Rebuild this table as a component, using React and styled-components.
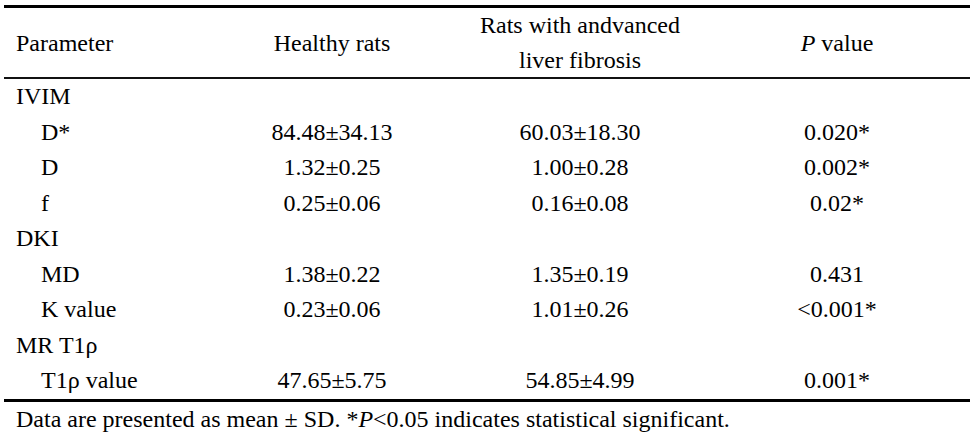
import React from "react";
import styled, { createGlobalStyle } from "styled-components";

const GlobalStyle = createGlobalStyle`
  html, body {
    margin: 0;
    padding: 0;
    background: #ffffff;
  }
`;

const Sheet = styled.div`
  width: 966px;
  margin: 5px 0 0 4px;
  font-family: "Liberation Serif", Tinos, "Times New Roman", monospace;
  font-size: 24px;
  color: #000000;
`;

const Grid = styled.div`
  display: grid;
  grid-template-columns: 204px 248px 248px 266px;
`;

const HeaderRow = styled(Grid)`
  height: 69px;
  border-top: 3px solid #000;
  border-bottom: 2px solid #111;
  align-items: center;
`;

const Body = styled.div`
  border-bottom: 3px solid #000;
`;

const Row = styled(Grid)`
  height: 35.5px;
`;

const Cell = styled.div`
  line-height: 35px;
  white-space: nowrap;
  text-align: ${(p) => (p.$left ? "left" : "center")};
  padding-left: ${(p) => (p.$left ? (p.$indent ? "37px" : "12px") : "0")};
`;

const Footnote = styled.p`
  margin: 0;
  padding-left: 12px;
  line-height: 35px;
  white-space: nowrap;
`;

const rows = [
  { label: "IVIM", group: true },
  { label: "D*", healthy: "84.48±34.13", fibrosis: "60.03±18.30", p: "0.020*" },
  { label: "D", healthy: "1.32±0.25", fibrosis: "1.00±0.28", p: "0.002*" },
  { label: "f", healthy: "0.25±0.06", fibrosis: "0.16±0.08", p: "0.02*" },
  { label: "DKI", group: true },
  { label: "MD", healthy: "1.38±0.22", fibrosis: "1.35±0.19", p: "0.431" },
  { label: "K value", healthy: "0.23±0.06", fibrosis: "1.01±0.26", p: "<0.001*" },
  { label: "MR T1ρ", group: true },
  { label: "T1ρ value", healthy: "47.65±5.75", fibrosis: "54.85±4.99", p: "0.001*" },
];

export default function App() {
  return (
    <>
      <GlobalStyle />
      <Sheet>
        <HeaderRow>
          <Cell $left>Parameter</Cell>
          <Cell>Healthy rats</Cell>
          <Cell>
            Rats with andvanced
            <br />
            liver fibrosis
          </Cell>
          <Cell>
            <i>P</i> value
          </Cell>
        </HeaderRow>
        <Body>
          {rows.map((r) => (
            <Row key={r.label}>
              <Cell $left $indent={!r.group}>
                {r.label}
              </Cell>
              <Cell>{r.healthy}</Cell>
              <Cell>{r.fibrosis}</Cell>
              <Cell>{r.p}</Cell>
            </Row>
          ))}
        </Body>
        <Footnote>
          Data are presented as mean ± SD. *<i>P</i>&lt;0.05 indicates statistical
          significant.
        </Footnote>
      </Sheet>
    </>
  );
}
